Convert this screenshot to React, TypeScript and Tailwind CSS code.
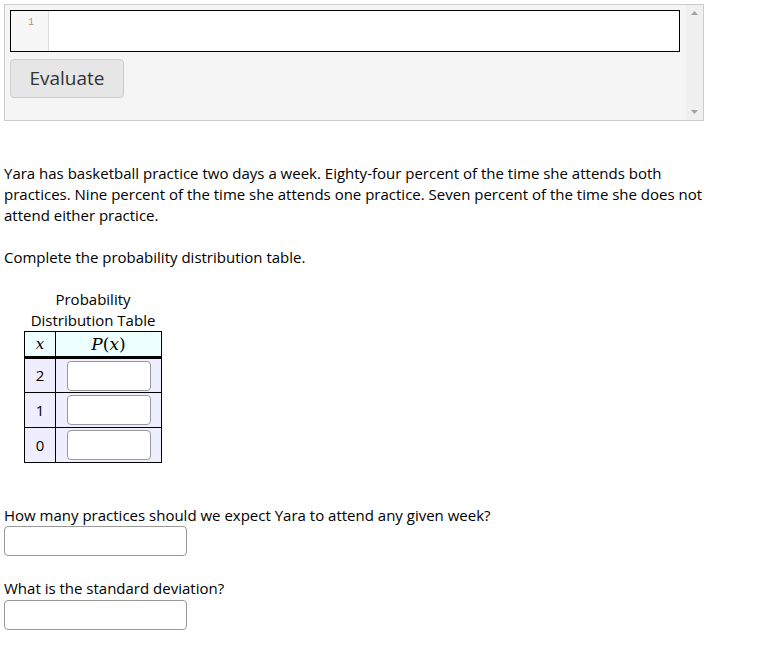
export default function App() {
  return (
    <div className="min-h-screen bg-white p-1 text-[15px] leading-[21px] text-black" style={{ fontFamily: '"Open Sans", sans-serif' }}>
      {/* code cell */}
      <div className="flex h-[117px] w-[700px] border border-[#cccccc] bg-[#f5f5f5]">
        <div className="flex-1 pl-[5px] pt-[5px] pr-[6px]">
          <div className="flex h-[42px] border border-black bg-white">
            <div className="w-[38px] border-r border-[#dddddd] bg-[#f7f7f7] pt-[5px] pr-[14px] text-right font-['Liberation_Mono',monospace] text-[10px] leading-[14px] text-[#999999]">
              1
            </div>
            <div className="flex-1" />
          </div>
          <button className="mt-[7px] h-[39px] w-[114px] rounded-[4px] border border-[#cccccc] bg-[#e6e6e6] text-[19px] text-[#333333]">
            Evaluate
          </button>
        </div>
        <div className="flex w-[17px] flex-col items-center justify-between bg-[#f0f0f0] py-[6px]">
          <svg width="7" height="4" viewBox="0 0 7 4">
            <path d="M3.5 0 L7 4 L0 4 Z" fill="#a3a3a3" />
          </svg>
          <svg width="7" height="4" viewBox="0 0 7 4">
            <path d="M0 0 L7 0 L3.5 4 Z" fill="#a3a3a3" />
          </svg>
        </div>
      </div>

      <p className="mt-[42px] w-[700px]">
        Yara has basketball practice two days a week. Eighty-four percent of the time she attends both practices. Nine
        percent of the time she attends one practice. Seven percent of the time she does not attend either practice.
      </p>
      <p className="mt-[21px]">Complete the probability distribution table.</p>

      <div className="ml-[20px] mt-[21px] w-[138px]">
        <div className="text-center">
          Probability
          <br />
          Distribution Table
        </div>
        <table className="w-[138px] border-collapse">
          <thead>
            <tr className="h-[26px] bg-[#eeffff]">
              <th className="w-[31px] border border-black border-b-[3px] p-0 text-center font-['DejaVu_Serif',serif] text-[15px] font-normal italic leading-[20px]">
                x
              </th>
              <th className="border border-black border-b-[3px] p-0 text-center font-['DejaVu_Serif',serif] text-[17px] font-normal leading-[20px]">
                <span className="italic">P</span>(<span className="italic">x</span>)
              </th>
            </tr>
          </thead>
          <tbody>
            {["2", "1", "0"].map((v) => (
              <tr key={v} className="h-[35px] bg-[#eeeeff]">
                <td className="border border-black p-0 text-center">{v}</td>
                <td className="border border-black p-0">
                  <div className="ml-[11px] h-[30px] w-[84px] rounded-[4px] border border-[#999999] bg-white" />
                </td>
              </tr>
            ))}
          </tbody>
        </table>
      </div>

      <p className="mt-[42px]">How many practices should we expect Yara to attend any given week?</p>
      <div className="h-[30px] w-[183px] rounded-[4px] border border-[#999999] bg-white" />

      <p className="mt-[22px]">What is the standard deviation?</p>
      <div className="mt-[1px] h-[30px] w-[183px] rounded-[4px] border border-[#999999] bg-white" />
    </div>
  );
}
